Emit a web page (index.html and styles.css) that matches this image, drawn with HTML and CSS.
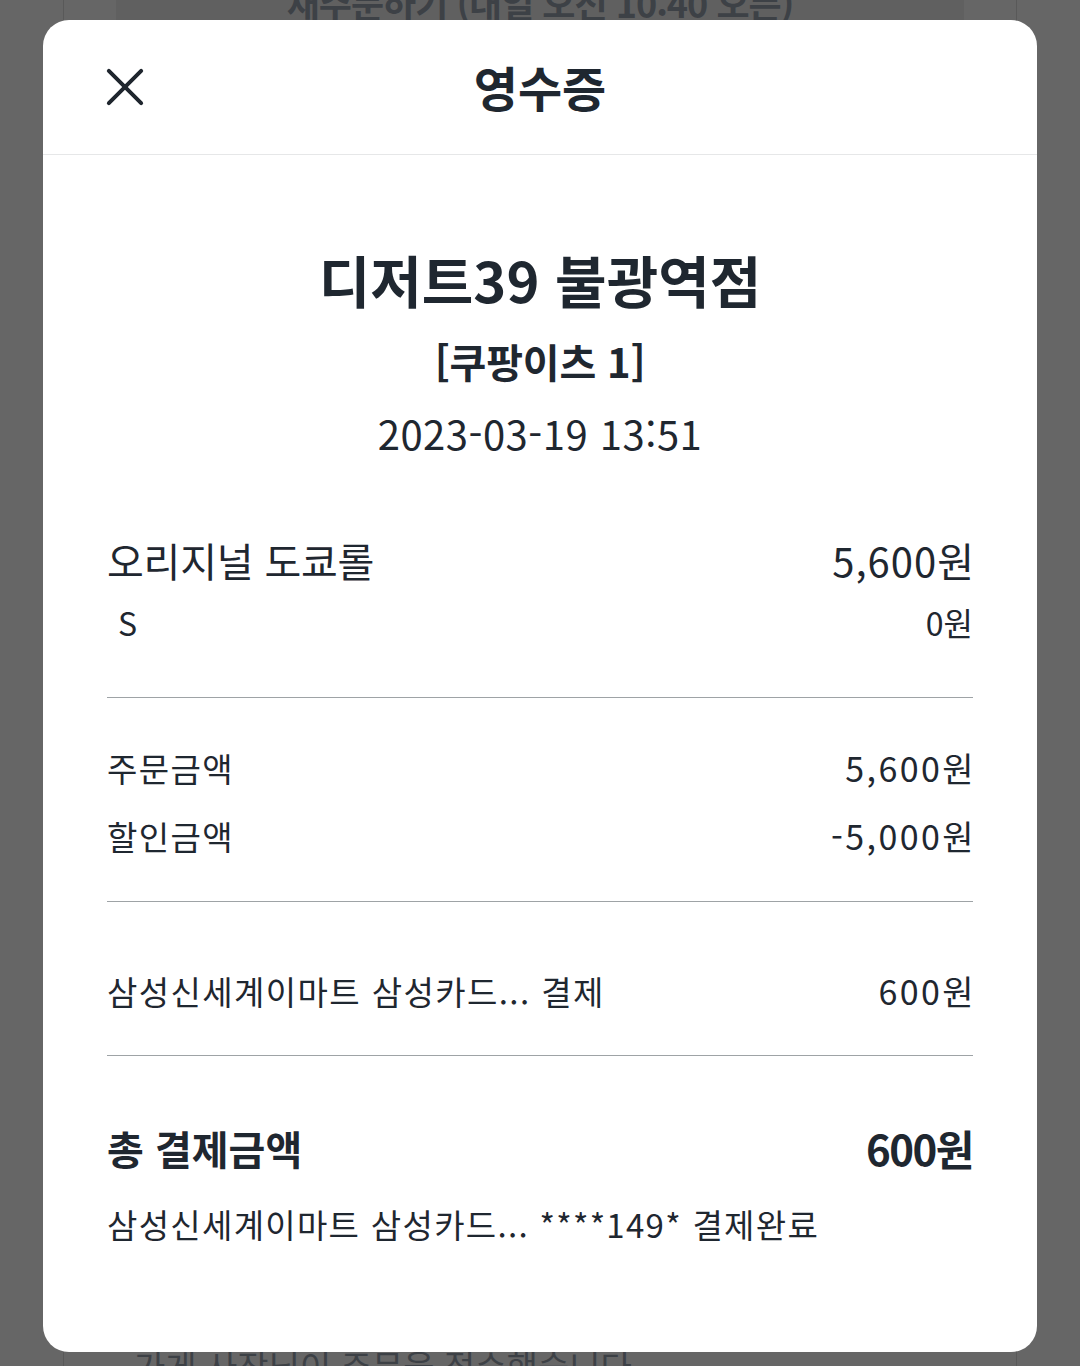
FILE: index.html
```html
<!DOCTYPE html>
<html lang="ko">
<head>
<meta charset="utf-8">
<title>영수증</title>
<link rel="stylesheet" href="styles.css">
</head>
<body>
<div class="screen">
  <div class="backdrop">
    <div class="reorder">재주문하기 (내일 오전 10:40 오픈)</div>
    <div class="back-fill"></div>
    <div class="back-note">가게 사장님이 주문을 접수했습니다.</div>
  </div>

  <div class="modal">
    <header class="modal-head">
      <button class="close" aria-label="닫기">
        <svg width="40" height="40" viewBox="0 0 40 40"><path d="M3 3 L37 37 M37 3 L3 37" stroke="#1f262e" stroke-width="4.2" stroke-linecap="round" fill="none"/></svg>
      </button>
      <h1 class="modal-title">영수증</h1>
    </header>

    <div class="modal-body">
      <div class="store">디저트39 불광역점</div>
      <div class="channel">[쿠팡이츠 1]</div>
      <div class="date">2023-03-19 13:51</div>

      <section class="items">
        <div class="row item-row"><span>오리지널 도쿄롤</span><span class="item-amt">5,600원</span></div>
        <div class="row option-row"><span class="opt">S</span><span>0원</span></div>
      </section>

      <section class="summary">
        <div class="row text-row"><span>주문금액</span><span class="amt">5,600원</span></div>
        <div class="row text-row second"><span>할인금액</span><span class="amt">-5,000원</span></div>
      </section>

      <section class="payment">
        <div class="row text-row"><span>삼성신세계이마트 삼성카드... 결제</span><span class="amt">600원</span></div>
      </section>

      <section class="total">
        <div class="row total-row"><span>총 결제금액</span><span class="total-amt">600원</span></div>
        <div class="text-row detail">삼성신세계이마트 삼성카드... ****149* 결제완료</div>
      </section>
    </div>
  </div>
</div>
</body>
</html>
```

FILE: styles.css
```css
* { box-sizing: border-box; }
html, body { margin: 0; padding: 0; }
body {
  width: 1080px;
  height: 1366px;
  overflow: hidden;
  background: #666666;
  font-family: "Noto Sans CJK KR", "Noto Sans", sans-serif;
  color: #1f2730;
}
.screen {
  position: relative;
  width: 1080px;
  height: 1366px;
}
.backdrop {
  margin: 0 63px;
  height: 1366px;
  border-left: 1px solid #595959;
  border-right: 1px solid #595959;
  display: flex;
  flex-direction: column;
  align-items: center;
}
.reorder {
  width: 848px;
  height: 40px;
  margin-top: -18px;
  background: #606060;
  color: #3d4146;
  font-size: 36px;
  font-weight: 700;
  line-height: 40px;
  text-align: center;
  letter-spacing: -1px;
}
.back-fill { flex: 1; }
.back-note {
  align-self: flex-start;
  margin-left: 70px;
  margin-bottom: -20px;
  font-size: 34px;
  line-height: 40px;
  color: #3d4146;
}
.modal {
  position: absolute;
  left: 43px;
  top: 20px;
  width: 994px;
  height: 1332px;
  background: #ffffff;
  border-radius: 26px;
  overflow: hidden;
}
.modal-head {
  position: relative;
  height: 135px;
  border-bottom: 1px solid #e6e7e8;
  display: flex;
  align-items: center;
  justify-content: center;
}
.close {
  position: absolute;
  left: 61px;
  top: 46px;
  width: 42px;
  height: 42px;
  padding: 2px;
  border: 0;
  background: transparent;
}
.close svg { display: block; width: 38px; height: 38px; }
.modal-title {
  margin: 0;
  font-size: 48px;
  font-weight: 700;
  letter-spacing: 0;
  line-height: 60px;
  margin-top: -2px;
}
.modal-body {
  padding: 89px 64px 0;
}
.store {
  text-align: center;
  font-size: 56px;
  font-weight: 700;
  line-height: 70px;
  letter-spacing: 0;
}
.channel {
  margin-top: 19px;
  text-align: center;
  font-size: 40px;
  font-weight: 700;
  line-height: 56px;
  letter-spacing: -0.2px;
}
.date {
  margin-top: 19px;
  text-align: center;
  font-size: 40px;
  font-weight: 400;
  line-height: 50px;
  letter-spacing: 0.5px;
}
.row {
  display: flex;
  justify-content: space-between;
  align-items: center;
}
.items {
  margin-top: 74px;
  padding-bottom: 53px;
  border-bottom: 1px solid #9ea3a6;
}
.item-row {
  font-size: 40px;
  line-height: 56px;
  letter-spacing: -0.2px;
}
.item-amt { letter-spacing: 1px; margin-right: -2px; }
.option-row {
  margin-top: 12px;
  font-size: 32px;
  line-height: 44px;
  letter-spacing: 0;
}
.opt { padding-left: 11px; }
.text-row {
  font-size: 33px;
  line-height: 48px;
  letter-spacing: 1.4px;
}
.amt {
  font-size: 34px;
  letter-spacing: 2.4px;
  margin-right: -3px;
}
.summary {
  padding-top: 46px;
  padding-bottom: 41px;
  border-bottom: 1px solid #9ea3a6;
}
.summary .second { margin-top: 20px; }
.payment {
  padding-top: 65px;
  padding-bottom: 40px;
  border-bottom: 1px solid #9ea3a6;
}
.total {
  padding-top: 62px;
}
.total-row {
  font-size: 40px;
  font-weight: 700;
  line-height: 60px;
  letter-spacing: 0;
}
.total-amt {
  font-size: 42px;
  letter-spacing: -1.5px;
}
.detail {
  margin-top: 22px;
  letter-spacing: 1.3px;
}
```
